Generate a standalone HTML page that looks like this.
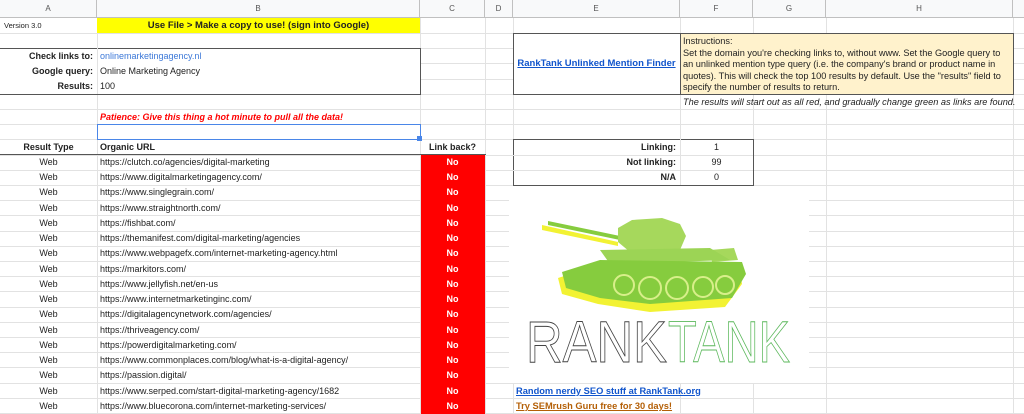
<!DOCTYPE html>
<html><head><meta charset="utf-8"><style>
*{margin:0;padding:0;box-sizing:border-box}
body{width:1024px;height:414px;overflow:hidden;background:#fff;font-family:"Liberation Sans",Arial,sans-serif;font-size:9px;color:#222;position:relative}
.t{position:absolute;height:15px;line-height:15px;white-space:nowrap;overflow:visible}
.b{font-weight:bold}
.r{text-align:right}.ctr{text-align:center}
.vl{position:absolute;top:0;width:1px;height:414px;background:#e2e2e2}
.hl{position:absolute;left:0;width:1024px;height:1px;background:#e2e2e2}
.hdr{position:absolute;top:0;left:0;width:1024px;height:18px;background:#f8f9fa;border-bottom:1px solid #c0c0c0}
.hc{position:absolute;top:0;height:18px;line-height:18px;text-align:center;color:#555;font-size:8px;border-right:1px solid #c0c0c0}
.box{position:absolute;border:1px solid #555}
a{color:#1155cc}
</style></head><body>
<div class="hl" style="top:33px"></div><div class="hl" style="top:48px"></div><div class="hl" style="top:63px"></div><div class="hl" style="top:79px"></div><div class="hl" style="top:94px"></div><div class="hl" style="top:109px"></div><div class="hl" style="top:124px"></div><div class="hl" style="top:139px"></div><div class="hl" style="top:155px"></div><div class="hl" style="top:170px"></div><div class="hl" style="top:185px"></div><div class="hl" style="top:200px"></div><div class="hl" style="top:215px"></div><div class="hl" style="top:231px"></div><div class="hl" style="top:246px"></div><div class="hl" style="top:261px"></div><div class="hl" style="top:276px"></div><div class="hl" style="top:291px"></div><div class="hl" style="top:307px"></div><div class="hl" style="top:322px"></div><div class="hl" style="top:337px"></div><div class="hl" style="top:352px"></div><div class="hl" style="top:367px"></div><div class="hl" style="top:383px"></div><div class="hl" style="top:398px"></div><div class="hl" style="top:413px"></div>
<div class="vl" style="left:97px"></div><div class="vl" style="left:420px"></div><div class="vl" style="left:485px"></div><div class="vl" style="left:513px"></div><div class="vl" style="left:680px"></div><div class="vl" style="left:753px"></div><div class="vl" style="left:826px"></div><div class="vl" style="left:1013px"></div>
<div class="hdr"></div>
<div class="hc" style="left:0;width:97px">A</div><div class="hc" style="left:97px;width:323px">B</div><div class="hc" style="left:420px;width:65px">C</div><div class="hc" style="left:485px;width:28px">D</div><div class="hc" style="left:513px;width:167px">E</div><div class="hc" style="left:680px;width:73px">F</div><div class="hc" style="left:753px;width:73px">G</div><div class="hc" style="left:826px;width:187px">H</div>
<div style="position:absolute;left:509px;top:186px;width:300px;height:197px;background:#fff"></div>
<div class="t" style="left:4px;top:18px;font-size:7.5px">Version 3.0</div>
<div class="t b ctr" style="left:97px;top:18px;width:323px;background:#ffff00;height:15px;font-size:9.5px">Use File &gt; Make a copy to use! (sign into Google)</div>
<div style="position:absolute;left:0;top:48px;width:420px;height:46px;background:#fff"></div>
<div class="box" style="left:0;top:48px;width:421px;height:47px;border-left:none"></div>
<div style="position:absolute;left:97px;top:48px;width:1px;height:46px;background:#e2e2e2"></div>
<div class="t b r" style="left:0;top:48.5px;width:93px">Check links to:</div>
<div class="t" style="left:100px;top:48.5px;color:#3c78d8">onlinemarketingagency.nl</div>
<div class="t b r" style="left:0;top:64px;width:93px">Google query:</div>
<div class="t" style="left:100px;top:64px">Online Marketing Agency</div>
<div class="t b r" style="left:0;top:79px;width:93px">Results:</div>
<div class="t" style="left:100px;top:79px">100</div>
<div class="t b" style="left:100px;top:110px;color:#ff0000;font-style:italic">Patience: Give this thing a hot minute to pull all the data!</div>
<div style="position:absolute;left:97px;top:124px;width:324px;height:16px;border:1.5px solid #4a86e8;background:#fff"></div>
<div style="position:absolute;left:417px;top:136px;width:5px;height:5px;background:#4a86e8"></div>
<div class="t b ctr" style="left:0;top:140px;width:97px">Result Type</div>
<div class="t b" style="left:100px;top:140px">Organic URL</div>
<div class="t b ctr" style="left:420px;top:140px;width:65px">Link back?</div>
<div style="position:absolute;left:0;top:154px;width:486px;height:1px;background:#555"></div>
<div style="position:absolute;left:421px;top:155px;width:64px;height:259px;background:#ff0000"></div>
<div class="t ctr" style="left:0;width:97px;top:155px">Web</div><div class="t" style="left:100px;top:155px">https://clutch.co/agencies/digital-marketing</div><div class="t b ctr" style="left:420px;width:65px;top:155px;color:#fff">No</div>
<div class="t ctr" style="left:0;width:97px;top:170px">Web</div><div class="t" style="left:100px;top:170px">https://www.digitalmarketingagency.com/</div><div class="t b ctr" style="left:420px;width:65px;top:170px;color:#fff">No</div>
<div class="t ctr" style="left:0;width:97px;top:185px">Web</div><div class="t" style="left:100px;top:185px">https://www.singlegrain.com/</div><div class="t b ctr" style="left:420px;width:65px;top:185px;color:#fff">No</div>
<div class="t ctr" style="left:0;width:97px;top:200.5px">Web</div><div class="t" style="left:100px;top:200.5px">https://www.straightnorth.com/</div><div class="t b ctr" style="left:420px;width:65px;top:200.5px;color:#fff">No</div>
<div class="t ctr" style="left:0;width:97px;top:216px">Web</div><div class="t" style="left:100px;top:216px">https://fishbat.com/</div><div class="t b ctr" style="left:420px;width:65px;top:216px;color:#fff">No</div>
<div class="t ctr" style="left:0;width:97px;top:231px">Web</div><div class="t" style="left:100px;top:231px">https://themanifest.com/digital-marketing/agencies</div><div class="t b ctr" style="left:420px;width:65px;top:231px;color:#fff">No</div>
<div class="t ctr" style="left:0;width:97px;top:246px">Web</div><div class="t" style="left:100px;top:246px">https://www.webpagefx.com/internet-marketing-agency.html</div><div class="t b ctr" style="left:420px;width:65px;top:246px;color:#fff">No</div>
<div class="t ctr" style="left:0;width:97px;top:261.5px">Web</div><div class="t" style="left:100px;top:261.5px">https://markitors.com/</div><div class="t b ctr" style="left:420px;width:65px;top:261.5px;color:#fff">No</div>
<div class="t ctr" style="left:0;width:97px;top:277px">Web</div><div class="t" style="left:100px;top:277px">https://www.jellyfish.net/en-us</div><div class="t b ctr" style="left:420px;width:65px;top:277px;color:#fff">No</div>
<div class="t ctr" style="left:0;width:97px;top:292px">Web</div><div class="t" style="left:100px;top:292px">https://www.internetmarketinginc.com/</div><div class="t b ctr" style="left:420px;width:65px;top:292px;color:#fff">No</div>
<div class="t ctr" style="left:0;width:97px;top:307px">Web</div><div class="t" style="left:100px;top:307px">https://digitalagencynetwork.com/agencies/</div><div class="t b ctr" style="left:420px;width:65px;top:307px;color:#fff">No</div>
<div class="t ctr" style="left:0;width:97px;top:322.5px">Web</div><div class="t" style="left:100px;top:322.5px">https://thriveagency.com/</div><div class="t b ctr" style="left:420px;width:65px;top:322.5px;color:#fff">No</div>
<div class="t ctr" style="left:0;width:97px;top:338px">Web</div><div class="t" style="left:100px;top:338px">https://powerdigitalmarketing.com/</div><div class="t b ctr" style="left:420px;width:65px;top:338px;color:#fff">No</div>
<div class="t ctr" style="left:0;width:97px;top:353px">Web</div><div class="t" style="left:100px;top:353px">https://www.commonplaces.com/blog/what-is-a-digital-agency/</div><div class="t b ctr" style="left:420px;width:65px;top:353px;color:#fff">No</div>
<div class="t ctr" style="left:0;width:97px;top:368px">Web</div><div class="t" style="left:100px;top:368px">https://passion.digital/</div><div class="t b ctr" style="left:420px;width:65px;top:368px;color:#fff">No</div>
<div class="t ctr" style="left:0;width:97px;top:383.5px">Web</div><div class="t" style="left:100px;top:383.5px">https://www.serped.com/start-digital-marketing-agency/1682</div><div class="t b ctr" style="left:420px;width:65px;top:383.5px;color:#fff">No</div>
<div class="t ctr" style="left:0;width:97px;top:399px">Web</div><div class="t" style="left:100px;top:399px">https://www.bluecorona.com/internet-marketing-services/</div><div class="t b ctr" style="left:420px;width:65px;top:399px;color:#fff">No</div>
<div style="position:absolute;left:513px;top:33px;width:501px;height:61px;background:#fff"></div>
<div style="position:absolute;left:680px;top:34px;width:333px;height:60px;background:#fff2cc"></div>
<div class="box" style="left:513px;top:33px;width:501px;height:62px"></div>
<div style="position:absolute;left:680px;top:33px;width:1px;height:62px;background:#555"></div>
<div class="t b ctr" style="left:513px;top:56px;width:167px;font-size:9.5px"><a style="color:#1155cc;text-decoration:underline">RankTank Unlinked Mention Finder</a></div>
<div style="position:absolute;left:683px;top:36px;line-height:11.6px;font-size:9.2px;color:#222;white-space:nowrap">Instructions:<br>Set the domain you're checking links to, without www. Set the Google query to<br>an unlinked mention type query (i.e. the company's brand or product name in<br>quotes). This will check the top 100 results by default. Use the "results" field to<br>specify the number of results to return.</div>
<div class="t" style="left:683px;top:94.5px;font-style:italic;font-size:9.2px">The results will start out as all red, and gradually change green as links are found.</div>
<div style="position:absolute;left:513px;top:139px;width:240px;height:46px;background:#fff"></div>
<div class="box" style="left:513px;top:139px;width:241px;height:47px"></div>
<div style="position:absolute;left:513px;top:155px;width:240px;height:1px;background:#e2e2e2"></div>
<div style="position:absolute;left:513px;top:170px;width:240px;height:1px;background:#e2e2e2"></div>
<div style="position:absolute;left:680px;top:139px;width:1px;height:46px;background:#e2e2e2"></div>
<div class="t b r" style="left:513px;top:140px;width:163px">Linking:</div><div class="t ctr" style="left:680px;top:140px;width:73px">1</div>
<div class="t b r" style="left:513px;top:155px;width:163px">Not linking:</div><div class="t ctr" style="left:680px;top:155px;width:73px">99</div>
<div class="t b r" style="left:513px;top:170px;width:163px">N/A</div><div class="t ctr" style="left:680px;top:170px;width:73px">0</div>
<svg style="position:absolute;left:500px;top:180px" width="320" height="205" viewBox="0 0 320 205">
<g fill="#f2f233">
<path d="M42 45 L118 62 L118 66 L42 50Z"/>
<path d="M58 98 L95 86 L240 90 L242 104 L225 127 L150 132 L98 124 L62 114Z"/>
</g>
<g fill="#86cc3e">
<path d="M48 41 L120 56 L120 60 L48 45Z"/>
<path d="M118 48 L132 40 L162 38 L180 44 L186 56 L180 70 L130 72 L118 62Z" fill="#a6d85c"/>
<path d="M210 70 L234 68 L238 80 L212 82Z" fill="#a6d85c"/>
<path d="M100 70 L210 68 L230 80 L110 84Z" fill="#9cd455"/>
<path d="M62 92 L100 80 L242 82 L246 94 L232 118 L150 124 L100 118 L66 108Z"/>
</g>
<g fill="none" stroke="#d8ef8a" stroke-width="2">
<circle cx="150" cy="108" r="11"/><circle cx="177" cy="108" r="11"/><circle cx="203" cy="107" r="10"/><circle cx="225" cy="105" r="9"/><circle cx="124" cy="105" r="10"/>
</g>
<text x="26" y="182" font-family="Liberation Sans, sans-serif" font-size="58" fill="none" stroke="#444" stroke-width="0.9" textLength="141" lengthAdjust="spacingAndGlyphs">RANK</text>
<text x="168" y="182" font-family="Liberation Sans, sans-serif" font-size="58" fill="none" stroke="#5cb85c" stroke-width="0.9" textLength="122" lengthAdjust="spacingAndGlyphs">TANK</text>
</svg>
<div class="t b" style="left:516px;top:383.5px;font-size:9.3px"><a style="color:#1155cc;text-decoration:underline">Random nerdy SEO stuff at RankTank.org</a></div>
<div class="t b" style="left:516px;top:399px;font-size:9.3px"><a style="color:#b45f06;text-decoration:underline">Try SEMrush Guru free for 30 days!</a></div>
</body></html>
